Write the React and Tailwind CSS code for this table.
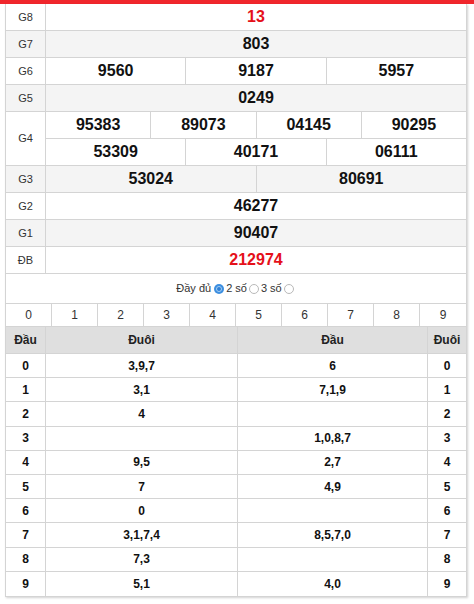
const prizes = [
  { label: "G8", nums: ["13"], red: true },
  { label: "G7", nums: ["803"], gray: true },
  { label: "G6", nums: ["9560", "9187", "5957"] },
  { label: "G5", nums: ["0249"], gray: true },
  { label: "G4", rows: [["95383", "89073", "04145", "90295"], ["53309", "40171", "06111"]] },
  { label: "G3", nums: ["53024", "80691"], gray: true },
  { label: "G2", nums: ["46277"] },
  { label: "G1", nums: ["90407"], gray: true },
  { label: "ĐB", nums: ["212974"], red: true },
];

const loto = [
  { head: "0", tail: "3,9,7", head2: "6" },
  { head: "1", tail: "3,1", head2: "7,1,9" },
  { head: "2", tail: "4", head2: "" },
  { head: "3", tail: "", head2: "1,0,8,7" },
  { head: "4", tail: "9,5", head2: "2,7" },
  { head: "5", tail: "7", head2: "4,9" },
  { head: "6", tail: "0", head2: "" },
  { head: "7", tail: "3,1,7,4", head2: "8,5,7,0" },
  { head: "8", tail: "7,3", head2: "" },
  { head: "9", tail: "5,1", head2: "4,0" },
];

function NumRow({ nums, red }) {
  return (
    <div className="flex h-[26px] w-full">
      {nums.map((n, i) => (
        <div
          key={i}
          className={`flex flex-1 items-center justify-center text-[16px] font-bold ${i > 0 ? "border-l border-[#d4d4d4]" : ""} ${red ? "text-[#e5101a]" : "text-[#111]"}`}
        >
          {n}
        </div>
      ))}
    </div>
  );
}

function Radio({ checked }) {
  if (checked) {
    return (
      <span className="ml-[3px] mr-[2px] inline-flex h-[10px] w-[10px] items-center justify-center rounded-full bg-[#3d8fe0]">
        <span className="h-[6px] w-[6px] rounded-full border border-[#a8d0f5] bg-[#2f7fd4]" />
      </span>
    );
  }
  return <span className="mx-[2px] inline-block h-[10px] w-[10px] rounded-full border border-[#b9b9b9] bg-white" />;
}

export default function App() {
  return (
    <div className="min-h-[604px] bg-white font-['Liberation_Sans',Arial,sans-serif]">
      <div className="h-[4px] bg-[#f0262c]" />
      <div className="ml-[5px] w-[462px] border-x border-b border-[#d4d4d4] shadow-[1px_1px_2px_rgba(0,0,0,0.18)]">
        {prizes.map((p) => (
          <div key={p.label} className={`flex border-b border-[#d4d4d4] ${p.gray ? "bg-[#f4f4f4]" : "bg-white"}`}>
            <div className="flex w-[40px] shrink-0 items-center justify-center border-r border-[#d4d4d4] text-[11px] text-[#333]">
              {p.label}
            </div>
            <div className="min-w-0 flex-1">
              {p.rows ? (
                <>
                  <NumRow nums={p.rows[0]} />
                  <div className="border-t border-[#d4d4d4]">
                    <NumRow nums={p.rows[1]} />
                  </div>
                </>
              ) : (
                <NumRow nums={p.nums} red={p.red} />
              )}
            </div>
          </div>
        ))}

        <div className="flex h-[30px] items-center justify-center border-b border-[#d4d4d4] text-[11px] text-[#333]">
          <span>Đầy đủ</span>
          <Radio checked />
          <span>2 số</span>
          <Radio />
          <span>3 số</span>
          <Radio />
        </div>

        <div className="grid h-[23px] grid-cols-10 border-b border-[#d4d4d4] text-[12px] text-[#333]">
          {[0, 1, 2, 3, 4, 5, 6, 7, 8, 9].map((d) => (
            <div key={d} className={`flex items-center justify-center ${d < 9 ? "border-r border-[#d4d4d4]" : ""}`}>
              {d}
            </div>
          ))}
        </div>

        <div className="flex h-[27px] border-b border-[#d4d4d4] bg-[#dfdfdf] text-[12px] font-bold text-[#222]">
          <div className="flex w-[40px] items-center justify-center border-r border-[#d4d4d4]">Đầu</div>
          <div className="flex w-[192px] items-center justify-center border-r border-[#d4d4d4]">Đuôi</div>
          <div className="flex w-[190px] items-center justify-center border-r border-[#d4d4d4]">Đầu</div>
          <div className="flex flex-1 items-center justify-center">Đuôi</div>
        </div>

        {loto.map((r, i) => (
          <div key={r.head} className={`flex h-[24.2px] text-[12px] font-bold text-[#111] ${i < 9 ? "border-b border-[#d4d4d4]" : ""}`}>
            <div className="flex w-[40px] items-center justify-center border-r border-[#d4d4d4]">{r.head}</div>
            <div className="flex w-[192px] items-center justify-center border-r border-[#d4d4d4]">{r.tail}</div>
            <div className="flex w-[190px] items-center justify-center border-r border-[#d4d4d4]">{r.head2}</div>
            <div className="flex flex-1 items-center justify-center">{r.head}</div>
          </div>
        ))}
      </div>
    </div>
  );
}
